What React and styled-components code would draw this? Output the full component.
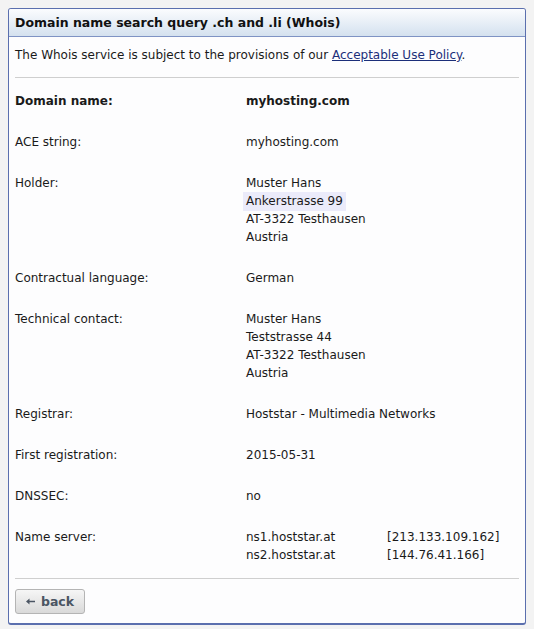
import React from "react";
import styled, { createGlobalStyle } from "styled-components";

const Global = createGlobalStyle`
  html, body { margin: 0; padding: 0; background: #f3f3f3; }
  body { font-family: "DejaVu Sans", Verdana, sans-serif; font-size: 12px; color: #1a1a1a; }
`;

const Page = styled.div`
  padding: 8px 8px 5px 8px;
`;

const Panel = styled.div`
  background: #fdfdfe;
  border: 1px solid #5b6fae;
  border-bottom-width: 2px;
  border-radius: 3px;
  overflow: hidden;
`;

const Header = styled.div`
  height: 27px;
  display: flex;
  align-items: center;
  padding: 0 6px;
  background: linear-gradient(#fbfcfe, #d4e1ef);
  border-bottom: 1px solid #7f93c4;
  font-weight: bold;
  font-size: 12.5px;
  color: #111;
`;

const Body = styled.div`
  padding: 0 6px 9px 6px;
`;

const Intro = styled.p`
  margin: 0;
  padding: 9px 0 0 0;
  line-height: 18px;
  height: 31px;
`;

const Link = styled.a`
  color: #1c2f7a;
  text-decoration: underline;
`;

const Divider = styled.hr`
  border: 0;
  border-top: 1px solid #cfcfcf;
  margin: 0;
`;

const Grid = styled.div`
  display: flex;
  flex-direction: column;
  gap: 23px;
  padding: 14px 0 14px 0;
`;

const Row = styled.div`
  display: grid;
  grid-template-columns: 231px 1fr;
  line-height: 18px;
  font-weight: ${(p) => (p.$bold ? "bold" : "normal")};
`;

const Lines = styled.div`
  display: flex;
  flex-direction: column;
`;

const Mark = styled.span`
  align-self: flex-start;
  background: #ebebfa;
  margin-left: -3px;
  padding: 0 3px 1px 3px;
  margin-bottom: -1px;
`;

const NsRow = styled.div`
  display: grid;
  grid-template-columns: 141px 1fr;
`;

const Footer = styled.div`
  padding-top: 10px;
`;

const Button = styled.button`
  font-family: inherit;
  font-size: 12.5px;
  font-weight: bold;
  color: #4b5563;
  height: 25px;
  width: 70px;
  border: 1px solid #b4b4b4;
  border-radius: 3px;
  background: linear-gradient(#f6f6f6, #d9d9d9);
  display: flex;
  align-items: center;
  justify-content: center;
  gap: 6px;
  padding: 0;
`;

const Arrow = styled.svg`
  width: 9px;
  height: 7px;
`;

const rows = [
  { label: "Domain name:", value: ["myhosting.com"], bold: true },
  { label: "ACE string:", value: ["myhosting.com"] },
  { label: "Holder:", value: ["Muster Hans", { mark: "Ankerstrasse 99" }, "AT-3322 Testhausen", "Austria"] },
  { label: "Contractual language:", value: ["German"] },
  { label: "Technical contact:", value: ["Muster Hans", "Teststrasse 44", "AT-3322 Testhausen", "Austria"] },
  { label: "Registrar:", value: ["Hoststar - Multimedia Networks"] },
  { label: "First registration:", value: ["2015-05-31"] },
  { label: "DNSSEC:", value: ["no"] },
];

export default function App() {
  return (
    <>
      <Global />
      <Page>
        <Panel>
          <Header>Domain name search query .ch and .li (Whois)</Header>
          <Body>
            <Intro>
              The Whois service is subject to the provisions of our <Link href="#">Acceptable Use Policy</Link>.
            </Intro>
            <Divider />
            <Grid>
              {rows.map((r) => (
                <Row key={r.label} $bold={r.bold}>
                  <div>{r.label}</div>
                  <Lines>
                    {r.value.map((v, i) =>
                      typeof v === "string" ? <span key={i}>{v}</span> : <Mark key={i}>{v.mark}</Mark>
                    )}
                  </Lines>
                </Row>
              ))}
              <Row>
                <div>Name server:</div>
                <Lines>
                  <NsRow><span>ns1.hoststar.at</span><span>[213.133.109.162]</span></NsRow>
                  <NsRow><span>ns2.hoststar.at</span><span>[144.76.41.166]</span></NsRow>
                </Lines>
              </Row>
            </Grid>
            <Divider />
            <Footer>
              <Button>
                <Arrow viewBox="0 0 9 7">
                  <path d="M0 3.5 L3.5 0.5 L3.5 2.7 L9 2.7 L9 4.3 L3.5 4.3 L3.5 6.5 Z" fill="#4b5563" />
                </Arrow>
                back
              </Button>
            </Footer>
          </Body>
        </Panel>
      </Page>
    </>
  );
}
